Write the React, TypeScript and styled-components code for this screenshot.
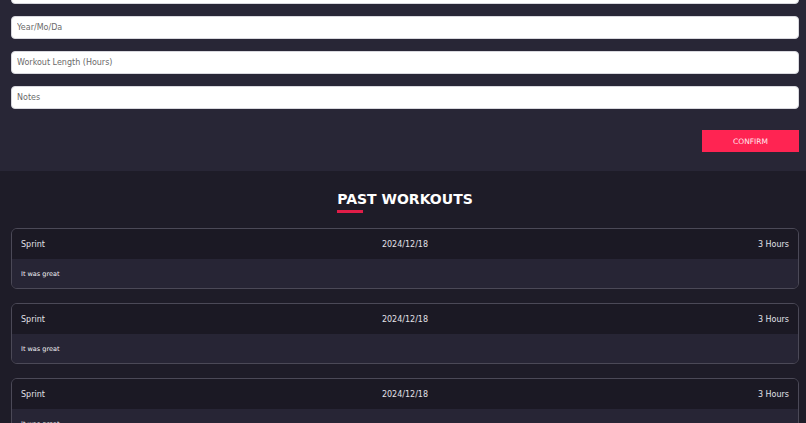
import React from 'react';
import styled, { createGlobalStyle } from 'styled-components';

const GlobalStyle = createGlobalStyle`
  html, body {
    margin: 0;
    padding: 0;
    background: #1e1c28;
    font-family: 'DejaVu Sans', 'Noto Sans', sans-serif;
  }
  * { box-sizing: border-box; }
`;

const Page = styled.div`
  display: flex;
  flex-direction: column;
  margin-top: -19px;
`;

const FormSection = styled.section`
  background: #282636;
  padding: 0 7px 19px 11px;
  display: flex;
  flex-direction: column;
`;

const Fields = styled.div`
  display: flex;
  flex-direction: column;
  gap: 12px;
`;

const Field = styled.input`
  height: 23px;
  width: 100%;
  border: 1px solid #d8d8de;
  border-radius: 4px;
  background: #fff;
  padding: 0 5px;
  font-family: inherit;
  font-size: 8px;
  color: #333;
  outline: none;
  &::placeholder {
    color: #6a6a6a;
  }
`;

const Actions = styled.div`
  display: flex;
  justify-content: flex-end;
  margin-top: 21px;
`;

const ConfirmButton = styled.button`
  width: 97px;
  height: 22px;
  border: none;
  background: #ff2452;
  color: #ffe6ec;
  font-family: inherit;
  font-size: 7.5px;
  cursor: pointer;
`;

const HistorySection = styled.section`
  background: #1e1c28;
  padding: 16px 7px 20px 11px;
  display: flex;
  flex-direction: column;
`;

const Title = styled.h2`
  margin: 0;
  align-self: center;
  color: #fff;
  font-size: 14px;
  font-weight: 700;
  line-height: 24px;
  position: relative;
  &::after {
    content: '';
    position: absolute;
    left: 0;
    bottom: -2px;
    width: 26px;
    height: 3px;
    background: #e11d48;
  }
`;

const List = styled.div`
  display: flex;
  flex-direction: column;
  gap: 14px;
  margin-top: 17px;
`;

const Card = styled.article`
  border: 1px solid #4b4957;
  border-radius: 6px;
  overflow: hidden;
`;

const CardHead = styled.div`
  height: 30px;
  background: #1b1924;
  display: grid;
  grid-template-columns: 1fr auto 1fr;
  align-items: center;
  padding: 0 9px;
  color: #e2e1e8;
  font-size: 8px;
`;

const Cell = styled.span<{ align?: string }>`
  text-align: ${(p) => p.align || 'left'};
`;

const CardBody = styled.div`
  height: 29px;
  background: #272535;
  display: flex;
  align-items: center;
  padding: 0 9px;
  color: #f2f2f5;
  font-size: 6.5px;
  font-weight: 400;
`;

const workouts = [
  { name: 'Sprint', date: '2024/12/18', hours: '3 Hours', notes: 'It was great' },
  { name: 'Sprint', date: '2024/12/18', hours: '3 Hours', notes: 'It was great' },
  { name: 'Sprint', date: '2024/12/18', hours: '3 Hours', notes: 'It was great' },
];

export default function App() {
  return (
    <>
      <GlobalStyle />
      <Page>
        <FormSection>
          <Fields>
            <Field placeholder="Workout Type" />
            <Field placeholder="Year/Mo/Da" />
            <Field placeholder="Workout Length (Hours)" />
            <Field placeholder="Notes" />
          </Fields>
          <Actions>
            <ConfirmButton>CONFIRM</ConfirmButton>
          </Actions>
        </FormSection>
        <HistorySection>
          <Title>PAST WORKOUTS</Title>
          <List>
            {workouts.map((w, i) => (
              <Card key={i}>
                <CardHead>
                  <Cell>{w.name}</Cell>
                  <Cell align="center">{w.date}</Cell>
                  <Cell align="right">{w.hours}</Cell>
                </CardHead>
                <CardBody>{w.notes}</CardBody>
              </Card>
            ))}
          </List>
        </HistorySection>
      </Page>
    </>
  );
}
